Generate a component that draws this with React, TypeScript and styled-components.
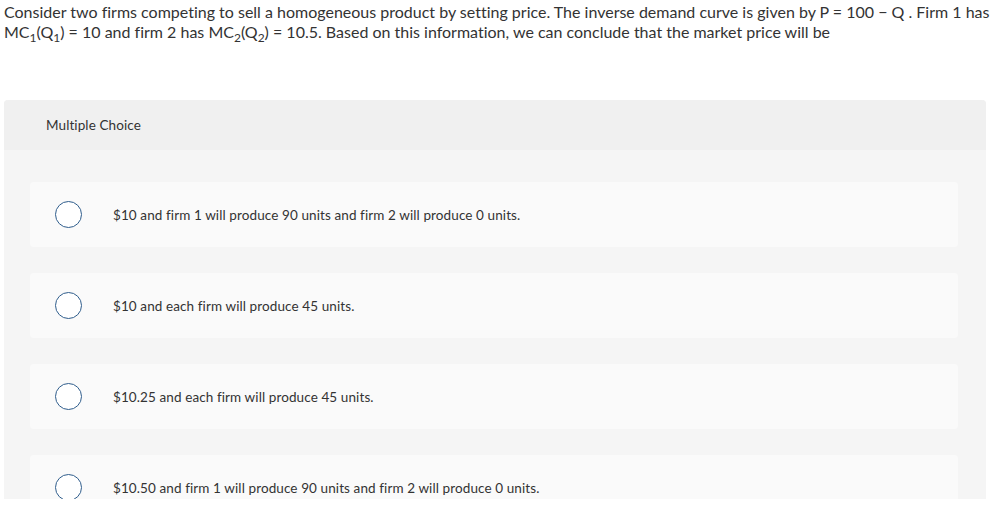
import React from "react";
import styled, { createGlobalStyle } from "styled-components";

const GlobalStyle = createGlobalStyle`
  html, body { margin: 0; padding: 0; background: #ffffff; }
  body {
    font-family: Lato, "Open Sans", Arial, sans-serif;
    color: #333333;
    font-variant-ligatures: none;
  }
`;

const Page = styled.div`
  height: 499px;
  overflow: hidden;
  padding: 2px 0 0 4px;
  box-sizing: border-box;
  width: 992px;
`;

const Question = styled.div`
  font-size: 16px;
  letter-spacing: 0;
  line-height: 20px;
  color: #333333;
  width: 988px;
  sub {
    font-size: 12px;
    vertical-align: -4px;
    line-height: 0;
  }
`;

const Panel = styled.section`
  margin-top: 58px;
  width: 982px;
  background: #f5f5f5;
  border-radius: 4px 4px 0 0;
`;

const PanelHeader = styled.div`
  height: 50px;
  background: #f0f0f0;
  border-radius: 4px 4px 0 0;
  display: flex;
  align-items: center;
  padding-left: 42px;
  font-size: 13.5px;
  letter-spacing: 0.1px;
  color: #333333;
`;

const Options = styled.div`
  display: flex;
  flex-direction: column;
  gap: 26px;
  padding: 32px 28px 40px 26px;
`;

const OptionCard = styled.label`
  display: flex;
  align-items: center;
  height: 65px;
  background: #fafafa;
  border-radius: 4px;
  padding-left: 25px;
  font-size: 13.5px;
  letter-spacing: 0.1px;
  color: #333333;
`;

const Radio = styled.span`
  width: 25px;
  height: 25px;
  border: 1.5px solid #2f5d8c;
  border-radius: 50%;
  background: #ffffff;
  flex: none;
  margin-right: 31px;
`;

const options = [
  "$10 and firm 1 will produce 90 units and firm 2 will produce 0 units.",
  "$10 and each firm will produce 45 units.",
  "$10.25 and each firm will produce 45 units.",
  "$10.50 and firm 1 will produce 90 units and firm 2 will produce 0 units.",
];

export default function App() {
  return (
    <>
      <GlobalStyle />
      <Page>
        <Question>
          Consider two firms competing to sell a homogeneous product by setting price. The inverse demand curve is given by P = 100 − Q . Firm 1 has MC<sub>1</sub>(Q<sub>1</sub>) = 10 and firm 2 has MC<sub>2</sub>(Q<sub>2</sub>) = 10.5. Based on this information, we can conclude that the market price will be
        </Question>
        <Panel>
          <PanelHeader>Multiple Choice</PanelHeader>
          <Options>
            {options.map((o) => (
              <OptionCard key={o}>
                <Radio />
                {o}
              </OptionCard>
            ))}
          </Options>
        </Panel>
      </Page>
    </>
  );
}
